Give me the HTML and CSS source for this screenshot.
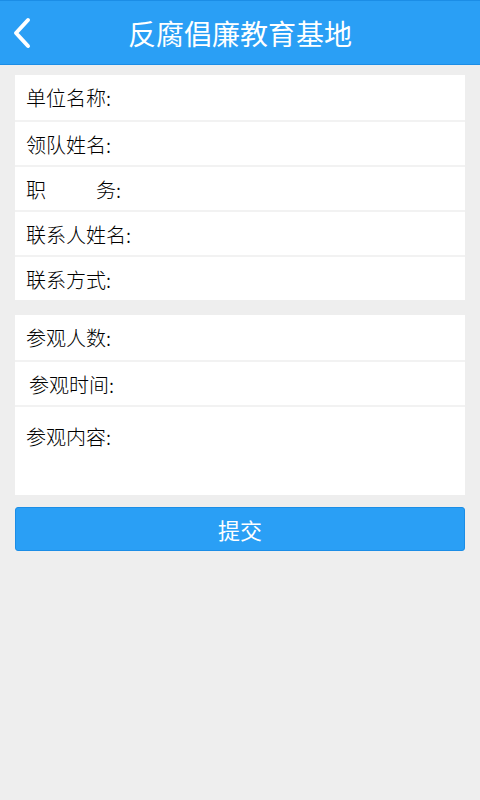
FILE: index.html
```html
<!DOCTYPE html>
<html lang="zh-CN">
<head>
    <meta charset="UTF-8">
    <meta name="viewport" content="width=device-width, initial-scale=1.0">
    <title>反腐倡廉教育基地</title>
    <link rel="stylesheet" href="styles.css">
</head>
<body>
    <div class="topbar">
        <a class="back" href="#">
            <svg width="20" height="32" viewBox="0 0 20 32">
                <path d="M16 3 L4 16 L16 29" fill="none" stroke="#fff" stroke-width="4" stroke-linecap="round" stroke-linejoin="round"/>
            </svg>
        </a>
        <h1>反腐倡廉教育基地</h1>
    </div>

    <div class="card">
        <div class="row">单位名称:</div>
        <div class="row">领队姓名:</div>
        <div class="row"><span class="spread">职</span>务:</div>
        <div class="row">联系人姓名:</div>
        <div class="row">联系方式:</div>
    </div>

    <div class="card">
        <div class="row">参观人数:</div>
        <div class="row shift">参观时间:</div>
        <div class="row tall">参观内容:</div>
    </div>

    <button class="submit">提交</button>
</body>
</html>
```

FILE: styles.css
```css
body {
    margin: 0;
    background: #eeeeee;
    font-family: "Noto Sans CJK SC", "Noto Sans", sans-serif;
    color: #000;
}
.topbar {
    position: relative;
    height: 63px;
    background: #2a9ff5;
    border-top: 1px solid #1b8de6;
    border-bottom: 1px solid #1b8de6;
    display: flex;
    align-items: center;
    justify-content: center;
}
.topbar h1 {
    margin: 0;
    font-size: 28px;
    font-weight: normal;
    color: #fff;
    line-height: 1;
}
.back {
    position: absolute;
    left: 12px;
    top: 16px;
    display: block;
    height: 32px;
}
.card {
    margin: 10px 15px 0;
    background: #fff;
}
.card + .card {
    margin-top: 15px;
}
.row {
    height: 43px;
    padding-left: 11px;
    font-size: 20px;
    font-weight: 300;
    line-height: 45px;
    border-top: 2px solid #f2f2f2;
}
.row:first-child {
    height: 45px;
    border-top: none;
}
.spread {
    display: inline-block;
    width: 70px;
}
.shift {
    padding-left: 14px;
}
.row.tall {
    height: 88px;
    line-height: 60px;
}
.submit {
    display: block;
    margin: 12px 15px 0;
    width: 450px;
    height: 44px;
    background: #2a9ff5;
    border: 1px solid #1b8de6;
    border-radius: 3px;
    color: #fff;
    font-family: "Noto Sans CJK SC", sans-serif;
    font-size: 22px;
    padding: 0;
}
```
